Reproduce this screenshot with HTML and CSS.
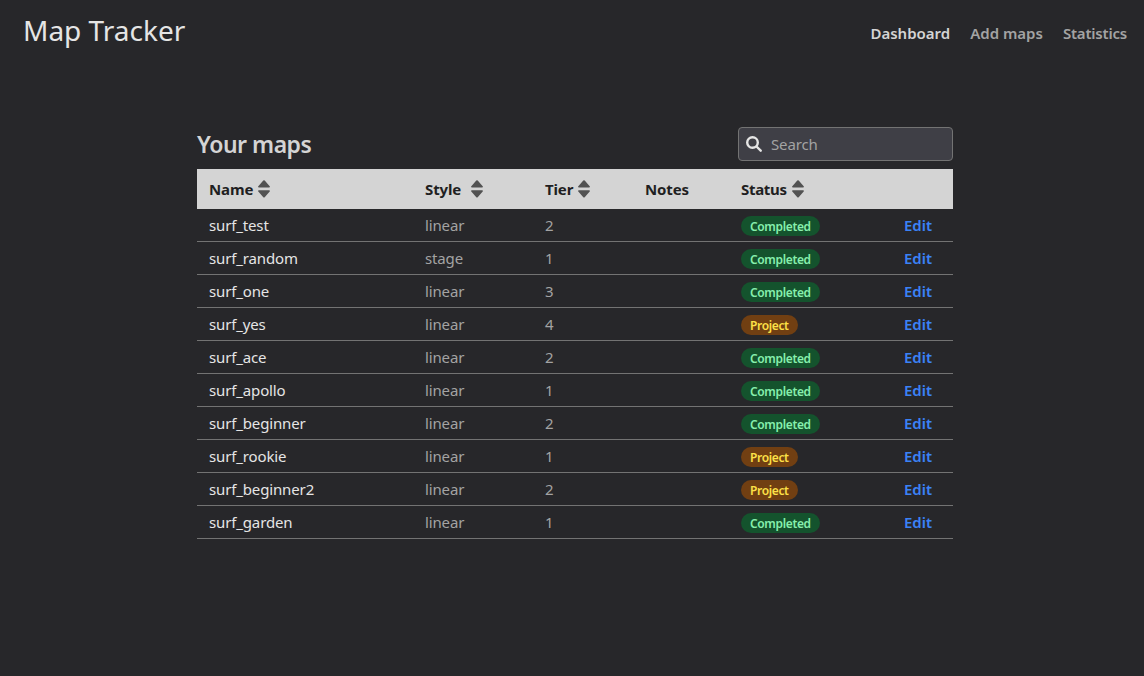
FILE: index.html
```html
<!DOCTYPE html>
<html lang="en">
<head>
<meta charset="utf-8">
<title>Map Tracker</title>
<link rel="stylesheet" href="styles.css">
</head>
<body>
<svg class="defs" aria-hidden="true">
  <symbol id="sort" viewBox="0 0 12 18"><path d="M5.3.6a1 1 0 0 1 1.4 0l5 5.600c.5.7.2 1.400-.6 1.400H.9c-.8 0-1.100-.7-.6-1.400zM5.300 17.200a1 1 0 0 0 1.400 0l5-5.600c.5-.7.2-1.400-.6-1.400H.9c-.8 0-1.100.7-.6 1.400z"/></symbol>
</svg>
<header class="topbar">
  <h1 class="brand">Map Tracker</h1>
  <nav class="nav">
    <a class="nav-link active">Dashboard</a>
    <a class="nav-link">Add maps</a>
    <a class="nav-link tight">Statistics</a>
  </nav>
</header>
<main class="content">
  <div class="toolbar">
    <h2 class="title">Your maps</h2>
    <div class="search">
      <svg class="search-icon" viewBox="0 0 16 16"><circle cx="6.500" cy="6.500" r="5.300"/><path d="M10.500 10.500 14.700 14.700"/></svg>
      <span>Search</span>
    </div>
  </div>
  <div class="table">
    <div class="row head">
      <div>Name<svg class="sort"><use href="#sort"/></svg></div>
      <div>Style<svg class="sort wide"><use href="#sort"/></svg></div>
      <div>Tier<svg class="sort"><use href="#sort"/></svg></div>
      <div>Notes</div>
      <div class="status">Status<svg class="sort"><use href="#sort"/></svg></div>
      <div></div>
    </div>
    <div class="row"><div class="name">surf_test</div><div>linear</div><div>2</div><div></div><div><span class="badge done">Completed</span></div><a class="edit">Edit</a></div>
    <div class="row"><div class="name">surf_random</div><div>stage</div><div>1</div><div></div><div><span class="badge done">Completed</span></div><a class="edit">Edit</a></div>
    <div class="row"><div class="name">surf_one</div><div>linear</div><div>3</div><div></div><div><span class="badge done">Completed</span></div><a class="edit">Edit</a></div>
    <div class="row"><div class="name">surf_yes</div><div>linear</div><div>4</div><div></div><div><span class="badge project">Project</span></div><a class="edit">Edit</a></div>
    <div class="row"><div class="name">surf_ace</div><div>linear</div><div>2</div><div></div><div><span class="badge done">Completed</span></div><a class="edit">Edit</a></div>
    <div class="row"><div class="name">surf_apollo</div><div>linear</div><div>1</div><div></div><div><span class="badge done">Completed</span></div><a class="edit">Edit</a></div>
    <div class="row"><div class="name">surf_beginner</div><div>linear</div><div>2</div><div></div><div><span class="badge done">Completed</span></div><a class="edit">Edit</a></div>
    <div class="row"><div class="name">surf_rookie</div><div>linear</div><div>1</div><div></div><div><span class="badge project">Project</span></div><a class="edit">Edit</a></div>
    <div class="row"><div class="name">surf_beginner2</div><div>linear</div><div>2</div><div></div><div><span class="badge project">Project</span></div><a class="edit">Edit</a></div>
    <div class="row"><div class="name">surf_garden</div><div>linear</div><div>1</div><div></div><div><span class="badge done">Completed</span></div><a class="edit">Edit</a></div>
  </div>
</main>
</body>
</html>
```
FILE: styles.css
```css
* { box-sizing: border-box; }
body {
  margin: 0;
  min-height: 676px;
  background: #27272a;
  color: #a3a3a3;
  font: 15px/24px "Noto Sans", "Open Sans", sans-serif;
  letter-spacing: -0.14px;
}
.defs { display: none; }
.topbar {
  display: flex;
  justify-content: space-between;
  height: 127px;
  padding: 12px 17px 0 23px;
}
.brand {
  margin: 0;
  color: #e5e5e5;
  font-size: 28px;
  font-weight: 400;
  letter-spacing: 0;
  line-height: 36px;
}
.nav { display: flex; gap: 20px; padding-top: 9px; }
.nav-link { font-weight: 600; letter-spacing: 0; }
.nav-link.active { color: #d4d4d4; }
.nav-link.tight { letter-spacing: -0.2px; }
.content { width: 756px; margin-left: 197px; }
.toolbar { display: flex; justify-content: space-between; height: 42px; }
.title {
  margin: 0;
  color: #d4d4d4;
  font-size: 23px;
  font-weight: 600;
  letter-spacing: -0.5px;
  line-height: 34px;
}
.search {
  display: flex;
  align-items: center;
  gap: 9px;
  width: 215px;
  height: 34px;
  padding-left: 7px;
  border: 1px solid #737373;
  border-radius: 4px;
  background: #3f3f46;
}
.search-icon {
  width: 16px;
  height: 16px;
  fill: none;
  stroke: #e5e5e5;
  stroke-width: 2.4;
  stroke-linecap: round;
}
.row {
  display: grid;
  grid-template-columns: 216px 120px 100px 96px 163px 1fr;
  align-items: center;
  height: 33px;
  padding-left: 12px;
  border-bottom: 1px solid #737373;
}
.head {
  height: 40px;
  border: 0;
  background: #d4d4d4;
  color: #1f1f22;
  font-weight: 700;
}
.head div { display: flex; align-items: center; }
.head .status { letter-spacing: -0.3px; }
.sort { width: 12px; height: 18px; margin-left: 5px; fill: #525252; }
.sort.wide { margin-left: 10px; }
.name { color: #e5e5e5; }
.badge {
  display: block;
  width: max-content;
  height: 20px;
  margin-top: 2px;
  padding: 0 9px;
  border-radius: 10px;
  font-size: 12px;
  font-weight: 600;
  letter-spacing: -0.35px;
  line-height: 21px;
}
.done { background: #14532d; color: #86efac; }
.project { background: #713f12; color: #fde047; }
.edit { color: #3b82f6; font-weight: 600; letter-spacing: 0; }
```
